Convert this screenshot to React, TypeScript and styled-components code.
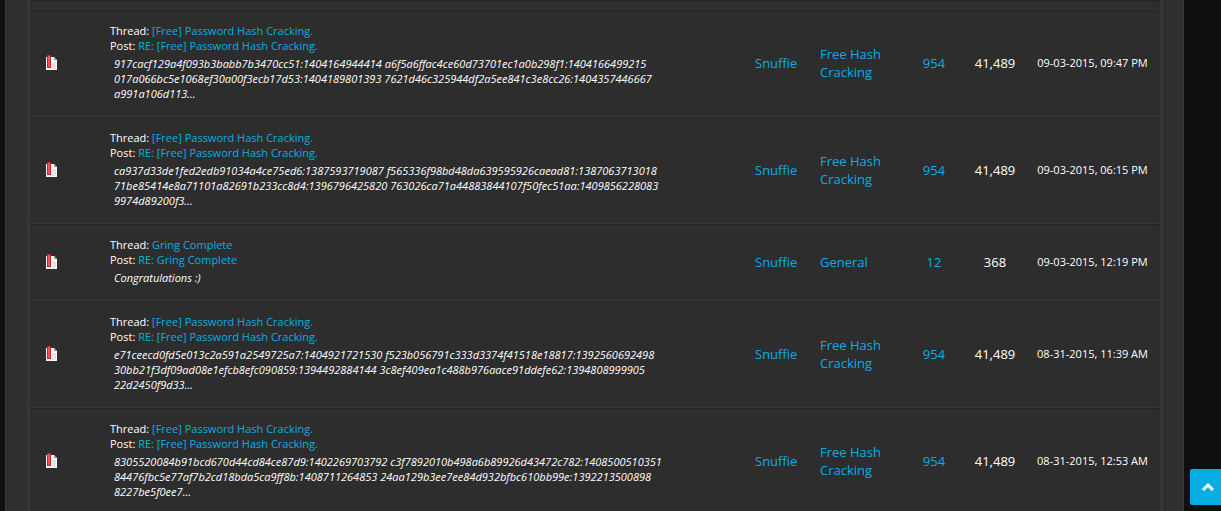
import React from "react";
import styled, { createGlobalStyle } from "styled-components";

const GlobalStyle = createGlobalStyle`
  body {
    margin: 0;
    background: #101010;
    color: #fff;
    font: 13px/18px "Open Sans", "Noto Sans", sans-serif;
  }
`;

const Page = styled.div`
  display: flex;
  box-sizing: border-box;
  height: 100vh;
  overflow: hidden;
  padding: 0 37px 0 5px;
`;

const Container = styled.main`
  display: flex;
  flex: 1;
  align-items: stretch;
  padding: 0 20px 0 21px;
  background: #2f2f2f;
  border: solid #393939;
  border-width: 0 1px;
`;

const Panel = styled.section`
  flex: 1;
  padding: 0 1px;
  background: #2d2d2d;
  border: solid #363636;
  border-width: 0 3px;
`;

const Results = styled.table`
  width: 100%;
  table-layout: fixed;
  border-collapse: separate;
  border-spacing: 0;
`;

const Col = styled.col<{ $width?: number }>`
  width: ${(p) => (p.$width ? `${p.$width}px` : "auto")};
`;

const Cell = styled.td<{ $align?: string }>`
  padding: 13px 6px 15px;
  border-top: 1px solid #242424;
  border-bottom: 1px solid #373737;
  text-align: ${(p) => p.$align ?? "left"};
  vertical-align: middle;
`;

const SpacerCell = styled(Cell)`
  height: 8px;
  padding: 0;
`;

const PostCell = styled(Cell)`
  padding-top: 12px;
  padding-right: 40px;
  font-size: 11px;
  line-height: 15px;
`;

const DateCell = styled(Cell)`
  padding-right: 0;
  padding-left: 0;
  font-size: 11px;
  text-align: center;
  white-space: nowrap;
`;

const Link = styled.a`
  color: #08ade4;
  text-decoration: none;
`;

const Excerpt = styled.div`
  padding: 3px 4px 0;
  font-style: italic;
`;

const DocIcon = styled.svg`
  display: block;
  margin: 0 auto;
`;

const TopButton = styled.button`
  position: fixed;
  right: -5px;
  bottom: 6px;
  display: flex;
  align-items: center;
  justify-content: center;
  width: 36px;
  height: 36px;
  padding: 0;
  border: 0;
  border-radius: 2px;
  background: #08ade4;
  cursor: pointer;
`;

interface Post {
  title: string;
  excerpt: string;
  forum: string;
  replies: string;
  views: string;
  date: string;
}

const cracking = {
  title: "[Free] Password Hash Cracking.",
  forum: "Free Hash Cracking",
  replies: "954",
  views: "41,489",
};

const posts: Post[] = [
  {
    ...cracking,
    excerpt:
      "917cacf129a4f093b3babb7b3470cc51:1404164944414 a6f5a6ffac4ce60d73701ec1a0b298f1:1404166499215 017a066bc5e1068ef30a00f3ecb17d53:1404189801393 7621d46c325944df2a5ee841c3e8cc26:1404357446667 a991a106d113...",
    date: "09-03-2015, 09:47 PM",
  },
  {
    ...cracking,
    excerpt:
      "ca937d33de1fed2edb91034a4ce75ed6:1387593719087 f565336f98bd48da639595926caead81:1387063713018 71be85414e8a71101a82691b233cc8d4:1396796425820 763026ca71a44883844107f50fec51aa:1409856228083 9974d89200f3...",
    date: "09-03-2015, 06:15 PM",
  },
  {
    title: "Gring Complete",
    excerpt: "Congratulations :)",
    forum: "General",
    replies: "12",
    views: "368",
    date: "09-03-2015, 12:19 PM",
  },
  {
    ...cracking,
    excerpt:
      "e71ceecd0fd5e013c2a591a2549725a7:1404921721530 f523b056791c333d3374f41518e18817:1392560692498 30bb21f3df09ad08e1efcb8efc090859:1394492884144 3c8ef409ea1c488b976aace91ddefe62:1394808999905 22d2450f9d33...",
    date: "08-31-2015, 11:39 AM",
  },
  {
    ...cracking,
    excerpt:
      "8305520084b91bcd670d44cd84ce87d9:1402269703792 c3f7892010b498a6b89926d43472c782:1408500510351 84476fbc5e77af7b2cd18bda5ca9ff8b:1408711264853 24aa129b3ee7ee84d932bfbc610bb99e:1392213500898 8227be5f0ee7...",
    date: "08-31-2015, 12:53 AM",
  },
];

function BookmarkedPage() {
  return (
    <DocIcon width="12" height="16" viewBox="0 0 12 16" aria-hidden="true">
      <path d="M1 2h8l3 3v10H1z" fill="#f4f8f7" />
      <path d="M7 7h4v7H7z" fill="#dde8e7" />
      <path d="M9 2v3h3z" fill="#8a9695" />
      <path d="M2 0h4v13H2z" fill="#c4242c" />
      <path d="M3 1h2v11H3z" fill="#f4525a" />
    </DocIcon>
  );
}

function PostRow({ post }: { post: Post }) {
  return (
    <tr>
      <Cell>
        <BookmarkedPage />
      </Cell>
      <Cell />
      <PostCell>
        <div>
          Thread: <Link href="#thread">{post.title}</Link>
        </div>
        <div>
          Post: <Link href="#post">RE: {post.title}</Link>
        </div>
        <Excerpt>{post.excerpt}</Excerpt>
      </PostCell>
      <Cell>
        <Link href="#user">Snuffie</Link>
      </Cell>
      <Cell>
        <Link href="#forum">{post.forum}</Link>
      </Cell>
      <Cell $align="center">
        <Link href="#replies">{post.replies}</Link>
      </Cell>
      <Cell $align="center">{post.views}</Cell>
      <DateCell>{post.date}</DateCell>
    </tr>
  );
}

export default function App() {
  return (
    <>
      <GlobalStyle />
      <Page>
        <Container>
          <Panel>
            <Results>
              <colgroup>
                <Col $width={40} />
                <Col $width={33} />
                <Col />
                <Col $width={65} />
                <Col $width={90} />
                <Col $width={60} />
                <Col $width={62} />
                <Col $width={133} />
              </colgroup>
              <tbody>
                <tr>
                  <SpacerCell colSpan={8} />
                </tr>
                {posts.map((post) => (
                  <PostRow key={post.date} post={post} />
                ))}
              </tbody>
            </Results>
          </Panel>
        </Container>
      </Page>
      <TopButton type="button" aria-label="Back to top">
        <svg width="14" height="10" viewBox="0 0 14 10" aria-hidden="true">
          <path d="M2 8l5-5 5 5" fill="none" stroke="#fff" strokeWidth="3" />
        </svg>
      </TopButton>
    </>
  );
}
